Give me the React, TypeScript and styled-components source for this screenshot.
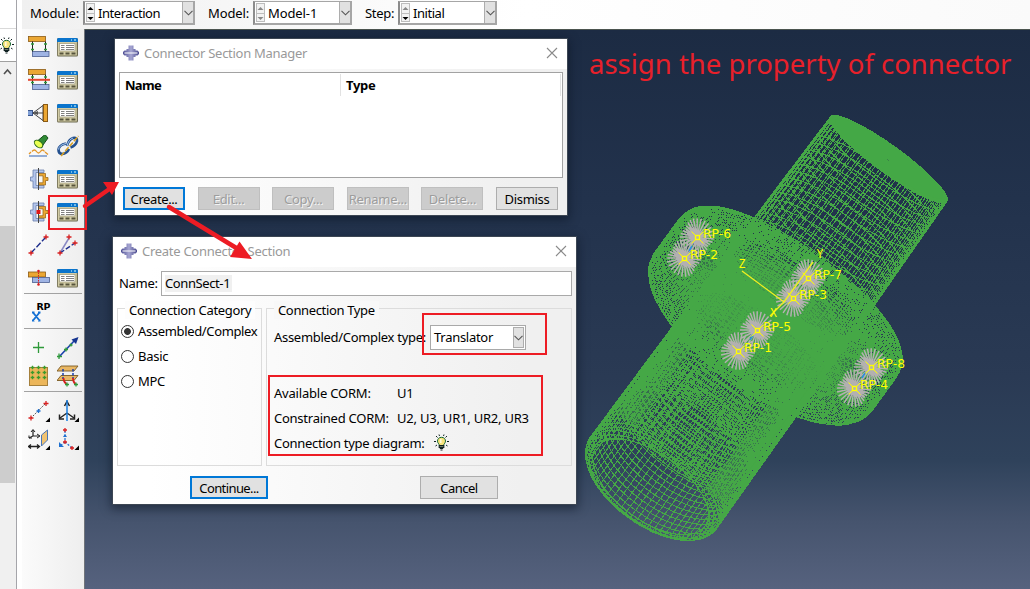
import React from 'react';
import styled, { createGlobalStyle, css } from 'styled-components';

const Global = createGlobalStyle`
  html, body { margin: 0; padding: 0; overflow: hidden; }
  *, *::before, *::after { box-sizing: border-box; }
  body { font-family: "Noto Sans", "Open Sans", sans-serif; font-size: 13px; color: #000; background: #fff; }
  svg { display: block; flex: none; }
`;

/* ---------- frame ---------- */
const Page = styled.div`position: relative; display: flex; width: 1030px; height: 589px; overflow: hidden; background: #fff;`;
const TreeStrip = styled.div`
  width: 17px; height: 589px; flex: none; display: flex; flex-direction: column;
  padding-top: 28px; border-right: 1px solid #a5a5aa;
  background: linear-gradient(#fff 28px, #d9d9d9 28px, #d9d9d9 29px, #fff 29px);
`;
const BulbCell = styled.div`height: 34px; padding: 9px 0 0; border-bottom: 1px solid #a0a0a0; overflow: hidden;`;
const ScrollTrack = styled.div`flex: 1; display: flex; flex-direction: column; background: #f0f0f0;`;
const ScrollUp = styled.div`height: 164px; padding: 6px 0 0 2px;`;
const ScrollThumb = styled.div`width: 15px; height: 257px; background: #cdcdcd;`;
const Main = styled.div`margin-left: 5px; flex: 1; display: flex; flex-direction: column; min-width: 0;`;
const ContextBar = styled.div`
  height: 29px; flex: none; display: flex; align-items: flex-start; padding: 1px 0 0 8px;
  background: linear-gradient(90deg, #f0f0f0, #fff 50%, #fafafa);
`;
const Work = styled.div`flex: 1; display: flex; min-height: 0;`;
const Toolbox = styled.div`
  width: 63px; flex: none; padding: 7px 5px 0 6px; border-right: 1px solid #70747a;
  background: linear-gradient(90deg, #fbfbfb, #eeeeee);
`;
const ToolRow = styled.div<{ $h?: number }>`display: flex; gap: 7px; height: ${p => p.$h ?? 33}px;`;
const Rule = styled.div<{ $mb?: number }>`height: 1px; margin: 0 -3px ${p => p.$mb ?? 0}px -4px; background: #a2a2a2;`;
const Viewport = styled.div`
  position: relative; flex: 1; overflow: hidden; border-top: 1px solid #4b544f;
  background: linear-gradient(#1c2b43 0%, #22324c 30%, #2a3a54 62%, #2f425b 77%, #46546e 88%, #56627e 100%);
`;

/* ---------- text ---------- */
const Text = styled.span<{ $ls?: number; $bold?: boolean; $c?: string }>`
  white-space: pre; line-height: 18px; letter-spacing: ${p => p.$ls ?? -0.28}px;
  font-weight: ${p => (p.$bold ? 700 : 400)}; color: ${p => p.$c ?? '#000'};
`;

/* ---------- context bar pieces ---------- */
const CtxLabel = styled.div<{ $w: number }>`width: ${p => p.$w}px; padding-top: 3px;`;
const Combo = styled.div<{ $w: number; $mr?: number }>`
  display: flex; width: ${p => p.$w}px; height: 24px; margin-right: ${p => p.$mr ?? 0}px;
  background: #fff; border: 2px solid #a6a6a6; border-top-width: 1px; border-left-color: #8c8c8c; padding-left: 1px;
`;
const Spin = styled.div`width: 9px; margin: 1px 0; border: 1px solid #bdbdbd; background: #f2f2f2; display: flex; flex-direction: column;`;
const ComboValue = styled.div`flex: 1; padding: 2px 0 0 3px;`;
const DropBtn = styled.div`
  width: 11px; background: #e1e1e1; border: 1px solid #adadad; border-width: 0 0 0 1px; display: flex; align-items: center; justify-content: center;
`;

/* ---------- dialogs ---------- */
const Dialog = styled.div<{ $x: number; $y: number; $w: number; $h: number }>`
  position: absolute; left: ${p => p.$x}px; top: ${p => p.$y}px; width: ${p => p.$w}px; height: ${p => p.$h}px;
  display: flex; flex-direction: column; background: linear-gradient(90deg, #fff 8%, #f0f0f0 88%);
  box-shadow: 0 0 0 1px #3c4653, 0 3px 9px 2px rgba(8, 16, 30, 0.5);
`;
const TitleBar = styled.div`height: 30px; flex: none; background: #fff; display: flex; align-items: center; padding: 0 9px 2px 8px;`;
const TitleText = styled.div`flex: 1; padding: 0 0 0 5px;`;
const ListBox = styled.div`
  height: 106px; margin: 3px 4px 0; border: 1px solid #a2a2a2; background: #fff; display: flex; padding: 1px 1px 0 0;
`;
const HeadCell = styled.div<{ $w: number }>`
  width: ${p => p.$w}px; height: 22px; padding: 2px 0 0 5px; border-right: 1px solid #e2e2e2;
`;
const ButtonRow = styled.div`display: flex; padding: 9px 9px 0 8px; justify-content: space-between;`;
const Button = styled.div<{ $w?: number; $state?: 'default' | 'disabled' }>`
  width: ${p => p.$w ?? 62}px; height: 23px; display: flex; align-items: center; justify-content: center;
  background: #e1e1e1; border: 1px solid #adadad;
  ${p => p.$state === 'default' && css`border: 2px solid #0078d7;`}
  ${p => p.$state === 'disabled' && css`background: #cccccc; border-color: #bfbfbf; span { color: #9d9d9d; text-shadow: 1px 1px 0 #f4f4f4; }`}
`;
const NameRow = styled.div`display: flex; align-items: center; height: 25px; margin: 4px 4px 0 6px;`;
const NameLabel = styled.div`width: 42px; padding-bottom: 1px;`;
const NameInput = styled.div`flex: 1; height: 25px; border: 1px solid #a9a9a9; background: #fff; padding: 3px 0 0 3px;`;
const Selected = styled.div`width: 67px; height: 17px; background: #f0f0f0; display: flex; align-items: flex-end;`;
const Groups = styled.div`display: flex; gap: 4px; margin: 12px 4px 0; height: 158px;`;
const Group = styled.div<{ $w: number }>`width: ${p => p.$w}px; height: 158px; border: 1px solid #dcdcdc; display: flex; flex-direction: column;`;
const Legend = styled.div<{ $w: number; $bg: string }>`
  width: ${p => p.$w}px; height: 18px; margin: -8px 0 0 7px; padding-left: 4px; background: ${p => p.$bg};
`;
const RadioRow = styled.div`display: flex; align-items: center; height: 25px; padding: 0 0 1px 3px; gap: 4px;`;
const Radio = styled.div<{ $on?: boolean }>`
  flex: none; width: 13px; height: 13px; border-radius: 50%; border: 1px solid #333;
  background: ${p => (p.$on ? 'radial-gradient(circle, #333 0 3px, #fff 3.8px)' : '#fff')};
`;
const TypeRow = styled.div`display: flex; align-items: center; height: 25px; margin-top: 6px; padding-left: 7px;`;
const TypeLabel = styled.div`width: 156px; padding-bottom: 1px;`;
const TypeCombo = styled.div`width: 96px; height: 25px; border: 1px solid #a9a9a9; background: #fff; display: flex; align-items: center; padding: 1px 1px 1px 3px;`;
const TypeValue = styled.div`flex: 1; display: flex; padding-bottom: 1px;`;
const TypeDrop = styled.div`width: 11px; height: 21px; background: #e1e1e1; border: 1px solid #adadad; display: flex; align-items: center; justify-content: center;`;
const InfoRows = styled.div`margin-top: 30px; padding-left: 7px;`;
const InfoRow = styled.div`display: flex; align-items: center; height: 25px;`;
const InfoKey = styled.div<{ $w: number }>`width: ${p => p.$w}px;`;
const FooterRow = styled.div`display: flex; gap: 152px; padding: 10px 0 0 77px;`;

/* ---------- overlays ---------- */
const Caption = styled.div`
  position: absolute; left: 589px; top: 43px; font-size: 27.5px; line-height: 42px; white-space: pre;
  color: #e8202a;
`;
const Overlay = styled.svg`position: absolute; left: 0; top: 0; pointer-events: none;`;
const Scene = styled.svg`position: absolute; left: 0; top: -1px;`;

/* ---------- small glyphs ---------- */
const Chevron = () => (
  <svg width="9" height="6" viewBox="0 0 9 6"><path d="M0.5 0.8 4.5 4.8 8.5 0.8" fill="none" stroke="#555" strokeWidth="1.1" /></svg>
);
const SpinArrows = ({ up, down }: { up: string; down: string }) => (
  <svg width="7" height="19" viewBox="0 0 7 19">
    <path d="M0.500 6 3.500 3 6.500 6z" fill={up} /><path d="M0 9.5h7" stroke="#bdbdbd" /><path d="M0.500 13 3.500 16 6.500 13z" fill={down} />
  </svg>
);
const CloseX = () => (
  <svg width="12" height="12" viewBox="0 0 12 12"><path d="M1 1 11 11M11 1 1 11" stroke="#8a8a8a" strokeWidth="1.1" /></svg>
);
const AppMark = () => (
  <svg width="16" height="16" viewBox="0 0 16 16">
    <defs><linearGradient id="mk" x1="0" x2="1"><stop offset="0" stopColor="#4e4e94" /><stop offset=".5" stopColor="#a6a6d2" /><stop offset="1" stopColor="#47478d" /></linearGradient></defs>
    <path d="M5.500 0.500h5v3.500h2v1.500h2L16 7v2l-1.500 1.500h-2V12h-2v3.500h-5V12h-2v-1.500h-2L0 9V7l1.500-1.500h2V4h2z" fill="url(#mk)" />
    <path d="M1.500 8h13" stroke="#fff" strokeWidth="1" />
  </svg>
);
const Bulb = ({ dx = 0 }: { dx?: number }) => (
  <svg width="16" height="17" viewBox={`${dx} 0 16 17`}>
    <path d="M7.500 3.300c-2.700 0-4 1.900-4 3.800 0 1.800 1.500 2.500 2 4.400h4c.5-1.900 2-2.600 2-4.400 0-1.900-1.300-3.800-4-3.800z" fill="#f7e37c" stroke="#163" strokeWidth="1" />
    <path d="M6.800 5v4" stroke="#fffbe0" strokeWidth="1.500" />
    <path d="M5.200 11.500h4.600v2H5.200zM5.800 14.500h3.400M6.500 16h2" fill="#6a7a6a" stroke="#122" strokeWidth="1.100" />
    <path d="M0 7.500h2M13 7.500h2M2 2l1.500 1.500M13 2l-1.500 1.500M5 .5l.5 1.500M10 .5 9.500 2M1.500 12 3 11M13.500 12 12 11" stroke="#122" strokeWidth="1" />
  </svg>
);

/* ---------- toolbox icons, 22 × 22 ---------- */
const Ico = ({ children, w = 22, h = 22 }: { children: React.ReactNode; w?: number; h?: number }) => (
  <svg width={w} height={h} viewBox={`0 0 ${w} ${h}`}>{children}</svg>
);
const Manager = () => (
  <Ico>
    <rect x="0" y="2" width="21" height="18.500" rx="1.500" fill="#6d6a50" />
    <rect x="0.800" y="6" width="19" height="13.500" fill="#d2cca6" />
    <path d="M0 3.500Q0 2 1.500 2h18Q21 2 21 3.500V6H0z" fill="#0a74cc" />
    <path d="M14 4h1M17 4h2" stroke="#dff" strokeWidth="1.200" />
    <rect x="2.500" y="7.500" width="15.500" height="7.500" fill="#fff" stroke="#a5a180" strokeWidth=".8" />
    <path d="M4 9.500h3.500M4 11.500h3.500M4 13.500h3.500M9 9.500h8M9 11.500h8M9 13.500h8" stroke="#808080" />
    <path d="M2.500 17.500h4M8.500 17.500h4M14.500 17.500h4" stroke="#57543c" strokeWidth="2" />
  </Ico>
);
const Plates = ({ red }: { red?: boolean }) => (
  <Ico>
    <rect x="0.500" y="0.500" width="17" height="5" fill="#eba733" stroke="#8a5a14" strokeWidth=".8" />
    <rect x="4.500" y="15.500" width="16.500" height="5" fill="#9fb4e4" stroke="#4b5f91" strokeWidth=".8" />
    <path d="M4.500 5.500v10M17.500 5.500v10" stroke="#222" strokeWidth="1" />
    <path d="M3 8h3M3 13.500h3M16 8h3M16 13.500h3" stroke="#2f9a3a" strokeWidth="1.500" />
    {red && <path d="M0 10.800h22" stroke="#e4472f" strokeWidth="2" />}
  </Ico>
);
const Coupling = () => (
  <Ico>
    <path d="M5 11h10M5 11 15 3.500M5 11l10 7.500M15 3v16" stroke="#444" strokeWidth="1" fill="none" />
    <path d="M10 9v4l-5-2z" fill="#555" />
    <rect x="-0.500" y="8.500" width="5" height="5" fill="#7f9fd6" stroke="#3b568c" />
    <rect x="15.500" y="2.500" width="4" height="17" fill="#eba733" stroke="#8a5a14" />
  </Ico>
);
const Torch = () => (
  <Ico>
    <path d="M10 5.500 17 -0.500 20 3 15 10z" fill="#2f8a35" stroke="#184f1c" />
    <path d="M8 5.500 15 11" stroke="#184f1c" strokeWidth="2" />
    <ellipse cx="10.500" cy="9" rx="4.800" ry="3" transform="rotate(40 10.500 9)" fill="#e9ff50" stroke="#2c6a1c" />
    <path d="M1 19 3 17M4 16.500q2.500-3 4.500 0 2 3 4 0t4 0M17 17l3 2.500" fill="none" stroke="#e3962a" strokeWidth="1.300" />
    <path d="M1 21h18" stroke="#2f62b5" />
  </Ico>
);
const Chain = () => (
  <Ico>
    <path d="M9 8.500Q2 10 1.500 14.500q-.2 4 3.500 4.500Q10 18.500 12 14" fill="none" stroke="#23508f" strokeWidth="2.600" />
    <path d="M10 11q1.500-6.500 6-8 4.500-.8 4 3Q19 10.500 13.500 12.500" fill="none" stroke="#23508f" strokeWidth="2.600" />
    <path d="M9 8.500Q2 10 1.500 14.500M10 11q1.500-6.500 6-8" fill="none" stroke="#a9c8ee" strokeWidth="1" />
    <path d="M4 21 21.500 1" stroke="#dca222" strokeWidth="1.500" strokeDasharray="5 1.500" />
  </Ico>
);
const Clamp = ({ dot }: { dot?: boolean }) => (
  <Ico>
    <path d="M5 2h11v2.500h-8v13h8v2.500h-11v-7h-2.500v-4h2.500z" fill="#b3c5ec" stroke="#6a7dab" strokeWidth=".8" />
    <path d="M10.500 5.500h7v4h2.500v3h-2.500v4.500h-7v-2.200h4.500v-7h-4.500z" fill="#eba733" stroke="#9a6a1c" strokeWidth=".8" />
    <path d="M10.500 0v22" stroke="#444" strokeWidth="1" />
    {dot && <rect x="8.500" y="9" width="4" height="4" fill="#e01818" />}
  </Ico>
);
const plus = (x: number, y: number, c: string, s = 2.5) => (
  <path key={`${x}-${y}`} d={`M${x - s} ${y}h${2 * s}M${x} ${y - s}v${2 * s}`} stroke={c} strokeWidth="1.300" />
);
const Wire = () => (
  <Ico><path d="M3 19 18 3" stroke="#1d2d8c" strokeWidth="1.400" strokeDasharray="6 2" />{plus(3, 19, '#d82020')}{plus(18, 3, '#d82020')}</Ico>
);
const Wire2 = () => (
  <Ico>
    <path d="M3 19 12 4" stroke="#8a8ac4" strokeWidth="1.500" /><path d="M3 19 18 9" stroke="#1d2d8c" strokeWidth="1.400" strokeDasharray="5 2" />
    {plus(3, 19, '#d82020')}{plus(12, 3, '#d82020')}{plus(18, 9, '#d82020')}
  </Ico>
);
const Fastener = () => (
  <Ico>
    <rect x="0.500" y="5" width="17" height="5" fill="#eba733" stroke="#8a5a14" strokeWidth=".8" />
    <rect x="4.500" y="10.500" width="17" height="5" fill="#9fb4e4" stroke="#4b5f91" strokeWidth=".8" />
    <path d="M10.500 3v15" stroke="#d82020" strokeDasharray="1.500 1" />
    <circle cx="10.500" cy="4" r="1.300" fill="#d82020" /><circle cx="10.500" cy="17.500" r="1.300" fill="#d82020" />
  </Ico>
);
const RefPoint = () => (
  <Ico w={26}>
    <text x="8.500" y="8.500" fontFamily="DejaVu Sans" fontWeight="700" fontSize="9.500" textLength="14" lengthAdjust="spacing">RP</text>
    <path d="M5 11.500 11.500 19.500M11.500 11.500 5 19.500M4 11.500h2.500M10 11.500h2.500M4 19.500h2.500M10 19.500h2.500" stroke="#1370d4" strokeWidth="1.900" fill="none" />
  </Ico>
);
const PointTool = () => <Ico>{plus(10.5, 10.5, '#2f9a3a', 5.5)}</Ico>;
const Vector = () => (
  <Ico>
    <path d="M2 20 18 3" stroke="#1a3fae" strokeWidth="1.600" />{plus(2, 19.500, '#2f9a3a', 3)}{plus(9, 12.500, '#2f9a3a', 2)}
    <path d="M21.500 0 19 7l-4.500-4.500z" fill="#15348f" />{plus(14, 8, '#2f9a3a', 1.500)}
  </Ico>
);
const GridPlate = () => (
  <Ico>
    <rect x="1.500" y="2.500" width="18" height="18" fill="#ecb65a" stroke="#a5803c" />
    {[4, 10, 16].flatMap(x => [2.5, 7.5, 12.5].map(y => plus(x + 0.5, y, '#3b9a2c', 1.8)))}
  </Ico>
);
const TwoPlates = () => (
  <Ico>
    <path d="M4 1h17l-4 5H0zM4 10.500h17l-4 5H0z" fill="#e8b765" stroke="#7a5a22" strokeWidth=".9" />
    <path d="M6 4v10M16 4v10" stroke="#1a3fae" strokeWidth="1.500" strokeDasharray="2.500 1.500" />
    <path d="M6.500 13q0 4 3 6M16 13q0 4 2.500 6" stroke="#d82020" strokeWidth="1.800" fill="none" />{plus(10, 19.500, '#2f9a3a', 2)}{plus(19, 19.500, '#2f9a3a', 2)}
  </Ico>
);
const Corner = () => <path d="M22 17.500v4.500h-4.500z" fill="#000" />;
const DatumPt = () => (
  <Ico>{<path d="M3 18 18 3" stroke="#333" strokeDasharray="1.500 1.500" />}{plus(3, 18, '#d82020')}{plus(10.5, 11, '#1d6fd0', 2)}{plus(18, 3.500, '#d82020')}<Corner /></Ico>
);
const Csys = () => (
  <Ico>
    <path d="M10 13 3 18M10 13l7 5" stroke="#222" strokeWidth="1.400" />
    <path d="M7.500 6 10 1.500 12.500 6M2.500 14.500v4.500H7M17.500 14.500v4.500H13" fill="none" stroke="#222" strokeWidth="1.500" />
    <path d="M10 0v21" stroke="#1a7fe0" strokeWidth="1.500" /><Corner />
  </Ico>
);
const DatumPlane = () => (
  <Ico>
    <path d="M5 2v6l-4 2M5 8h6" stroke="#222" fill="none" strokeWidth="1.200" /><path d="M3 4 5 1.500 7 4M9 6l3 2-3 2M1 7.500V10h3" fill="none" stroke="#222" />
    <path d="M1 18.500h10M3 16.500l-2.500 2 2.500 2M9 16.500l2.500 2-2.500 2" fill="none" stroke="#222" strokeWidth="1.300" />
    <path d="M13.500 7 19.500 2v10l-6 6z" fill="#f0c373" stroke="#4a76b8" /><Corner />
  </Ico>
);
const CsysPts = () => (
  <Ico>
    <path d="M8 3v10M8 14l-5 4M8 14l7 6" stroke="#1d6fd0" strokeDasharray="2 1.500" strokeWidth="1.200" />
    {plus(8, 2, '#d82020', 2)}{plus(8, 14, '#d82020', 2)}{plus(15, 20, '#d82020', 2)}<path d="M8 6l2 3H6zM2 14v5h5z" fill="#1d6fd0" /><Corner />
  </Ico>
);

/* ---------- wireframe model ---------- */
const ratio = (y: number) => 0.19 + (0.31 * (y + 195)) / 406;
type Pt = [number, number];
const lerp = (a: Pt, b: Pt, step: number): Pt[] => {
  const n = Math.max(1, Math.round(Math.hypot(b[0] - a[0], b[1] - a[1]) / step));
  return Array.from({ length: n + 1 }, (_, i) => [a[0] + ((b[0] - a[0]) * i) / n, a[1] + ((b[1] - a[1]) * i) / n] as Pt);
};
/* profile points are [axial position, radius] */
const surface = (profile: Pt[], meridians: number) => {
  const rings = profile.map(([y, r]) => {
    const b = r * ratio(y);
    return `M${-r} ${y}a${r} ${b} 0 1 0 ${2 * r} 0a${r} ${b} 0 1 0 ${-2 * r} 0`;
  });
  const lines = Array.from({ length: meridians }, (_, i) => {
    const t = (i / meridians) * Math.PI * 2 + 0.02;
    return profile.map(([y, r], k) => `${k ? 'L' : 'M'}${(r * Math.cos(t)).toFixed(2)} ${(y + r * ratio(y) * Math.sin(t)).toFixed(2)}`).join('');
  });
  return rings.join('') + lines.join('');
};
const upperTube = surface(lerp([-195, 72], [-34, 75], 9), 56);
const upperCap = surface(lerp([-195, 72], [-194, 4], 2.2), 90);
const lowerTube = surface(lerp([28, 76], [205, 78], 5.6), 74);
const lowerBore = surface(lerp([40, 71], [150, 72], 6), 64);
const lowerRim = surface([[205, 78], [208, 77], [211, 74], [212, 70], [210, 67]], 74);
const core = surface(lerp([-34, 75], [28, 76], 3), 100);
const flange = surface(
  [...lerp([-36, 75], [-38, 122], 4), [-36, 128], [-32, 132], [-26, 134], ...lerp([-22, 134.5], [18, 134.5], 4), [24, 133], [29, 129], [32, 124], ...lerp([33, 120], [30, 76], 4)] as Pt[],
  150,
);

const refs: { n: number; x: number; y: number }[] = [
  { n: 6, x: 697, y: 237 }, { n: 2, x: 684, y: 258 }, { n: 7, x: 808, y: 278 }, { n: 3, x: 793, y: 298 },
  { n: 5, x: 757, y: 330 }, { n: 1, x: 738, y: 351 }, { n: 8, x: 871, y: 367 }, { n: 4, x: 854, y: 388 },
];
/* spokes run to two offset rims, one on each side of the plate hole */
const burst = (x: number, y: number) =>
  Array.from({ length: 44 }, (_, i) => {
    const t = (i / 44) * Math.PI * 2;
    const side = i % 2 ? 1 : -1;
    const u = 14.500 * Math.cos(t);
    const v = 11 * Math.sin(t) + side * 5;
    const ex = u * 0.81 - v * 0.59;
    const ey = u * 0.59 + v * 0.81;
    return `M${x} ${y}l${(ex * 1.05).toFixed(1)} ${(ey * 1.15).toFixed(1)}`;
  }).join('');

const Model = () => (
  <Scene width="945" height="560" viewBox="85 29 945 560">
    <defs>
      <radialGradient id="dense"><stop offset="0" stopColor="#45a846" stopOpacity=".95" /><stop offset=".6" stopColor="#45a846" stopOpacity=".75" /><stop offset="1" stopColor="#45a846" stopOpacity="0" /></radialGradient>
    </defs>
    <g transform="translate(774 317) rotate(36)">
      <g fill="none" stroke="#45a846" strokeWidth="1" shapeRendering="crispEdges">
        <path d={upperTube} /><path d={upperCap} /><path d={flange} /><path d={core} />
        <path d={lowerBore} /><path d={lowerTube} /><path d={lowerRim} />
      </g>
      <ellipse cx="0" cy="4" rx="124" ry="64" fill="url(#dense)" />
      <ellipse cx="0" cy="-196" rx="66" ry="12" fill="#45a846" opacity=".7" />
      <rect x="-72" y="10" width="24" height="160" fill="#45a846" opacity=".45" />
      <rect x="46" y="10" width="24" height="170" fill="#45a846" opacity=".5" />
    </g>
    <path d={refs.map(r => burst(r.x, r.y)).join('')} stroke="#b3b0b0" strokeWidth="1.500" />
    <g stroke="#2a8fe0" strokeWidth="1.500"><path d="M689 251l3-5M750 340l3-5M862 378l3-5" /></g>
    <path d="M784 302 742 271M784 302 813 262M784 302 770 316" stroke="#f0f020" strokeWidth="1.300" />
    <g stroke="#ffff00" fill="none" strokeWidth="1">
      {refs.map(({ n, x, y }) => (
        <g key={n} transform={`translate(${x + 0.5} ${y + 0.5})`}>
          <rect x="-2" y="-2" width="4" height="4" strokeWidth="1.400" /><path d="M-6-6l4 4M6-6l-4 4M-6 6l4-4M6 6l-4-4" />
        </g>
      ))}
    </g>
    <g fill="#ffff00" fontFamily="DejaVu Sans" fontSize="12">
      {refs.map(({ n, x, y }) => <text key={n} x={x + 6} y={y + 1} textLength="28" lengthAdjust="spacingAndGlyphs">{`RP-${n}`}</text>)}
      <g fontFamily="DejaVu Sans Mono" fontSize="11.500"><text x="738.500" y="268">Z</text><text x="816.500" y="258">Y</text><text x="770" y="317">X</text></g>
    </g>
  </Scene>
);

const disabledButtons = ['Edit...', 'Copy...', 'Rename...', 'Delete...'];

export default function App() {
  return (
    <Page>
      <Global />
      <TreeStrip>
        <BulbCell><Bulb dx={1} /></BulbCell>
        <ScrollTrack>
          <ScrollUp><svg width="11" height="8" viewBox="0 0 11 8"><path d="M2 6 5.500 2 9 6" fill="none" stroke="#505050" strokeWidth="1.600" /></svg></ScrollUp>
          <ScrollThumb />
        </ScrollTrack>
      </TreeStrip>
      <Main>
        <ContextBar>
          <CtxLabel $w={53}><Text $ls={-0.1}>Module:</Text></CtxLabel>
          <Combo $w={112} $mr={13}><Spin><SpinArrows up="#000" down="#000" /></Spin><ComboValue><Text $ls={-0.45}>Interaction</Text></ComboValue><DropBtn><Chevron /></DropBtn></Combo>
          <CtxLabel $w={45}><Text $ls={-0.1}>Model:</Text></CtxLabel>
          <Combo $w={99} $mr={13}><Spin><SpinArrows up="#888" down="#888" /></Spin><ComboValue><Text $ls={-0.1}>Model-1</Text></ComboValue><DropBtn><Chevron /></DropBtn></Combo>
          <CtxLabel $w={33}><Text>Step:</Text></CtxLabel>
          <Combo $w={99}><Spin><SpinArrows up="#888" down="#000" /></Spin><ComboValue><Text $ls={-0.45}>Initial</Text></ComboValue><DropBtn><Chevron /></DropBtn></Combo>
        </ContextBar>
        <Work>
          <Toolbox>
            <ToolRow><Plates /><Manager /></ToolRow>
            <ToolRow><Plates red /><Manager /></ToolRow>
            <ToolRow><Coupling /><Manager /></ToolRow>
            <ToolRow><Torch /><Chain /></ToolRow>
            <ToolRow><Clamp /><Manager /></ToolRow>
            <ToolRow><Clamp dot /><Manager /></ToolRow>
            <ToolRow><Wire /><Wire2 /></ToolRow>
            <ToolRow $h={26}><Fastener /><Manager /></ToolRow>
            <Rule $mb={7} />
            <ToolRow $h={27}><RefPoint /></ToolRow>
            <Rule $mb={8} />
            <ToolRow $h={28}><PointTool /><Vector /></ToolRow>
            <ToolRow $h={26}><GridPlate /><TwoPlates /></ToolRow>
            <Rule $mb={8} />
            <ToolRow $h={28}><DatumPt /><Csys /></ToolRow>
            <ToolRow><DatumPlane /><CsysPts /></ToolRow>
          </Toolbox>
          <Viewport>
            <Model />
            <Dialog $x={30} $y={9} $w={452} $h={176}>
              <TitleBar><AppMark /><TitleText><Text $c="#999">Connector Section Manager</Text></TitleText><CloseX /></TitleBar>
              <ListBox>
                <HeadCell $w={221}><Text $bold $ls={-0.7}>Name</Text></HeadCell>
                <HeadCell $w={220}><Text $bold $ls={-0.3}>Type</Text></HeadCell>
              </ListBox>
              <ButtonRow>
                <Button $state="default"><Text $ls={-0.4}>Create...</Text></Button>
                {disabledButtons.map(t => <Button key={t} $state="disabled"><Text>{t}</Text></Button>)}
                <Button><Text>Dismiss</Text></Button>
              </ButtonRow>
            </Dialog>
            <Dialog $x={28} $y={207} $w={463} $h={267}>
              <TitleBar><AppMark /><TitleText><Text $c="#999">Create Connector Section</Text></TitleText><CloseX /></TitleBar>
              <NameRow>
                <NameLabel><Text>Name:</Text></NameLabel>
                <NameInput><Selected><Text $ls={-0.4}>ConnSect-1</Text></Selected></NameInput>
              </NameRow>
              <Groups>
                <Group $w={145}>
                  <Legend $w={130} $bg="#fdfdfd"><Text $ls={-0.32}>Connection Category</Text></Legend>
                  <RadioRow><Radio $on /><Text $ls={-0.35}>Assembled/Complex</Text></RadioRow>
                  <RadioRow><Radio /><Text>Basic</Text></RadioRow>
                  <RadioRow><Radio /><Text>MPC</Text></RadioRow>
                </Group>
                <Group $w={306}>
                  <Legend $w={105} $bg="#f8f8f8"><Text $ls={-0.35}>Connection Type</Text></Legend>
                  <TypeRow>
                    <TypeLabel><Text $ls={-0.3}>Assembled/Complex type:</Text></TypeLabel>
                    <TypeCombo><TypeValue><Text>Translator</Text></TypeValue><TypeDrop><Chevron /></TypeDrop></TypeCombo>
                  </TypeRow>
                  <InfoRows>
                    <InfoRow><InfoKey $w={123}><Text $ls={-0.2}>Available CORM:</Text></InfoKey><Text>U1</Text></InfoRow>
                    <InfoRow><InfoKey $w={123}><Text $ls={-0.25}>Constrained CORM:</Text></InfoKey><Text $ls={-0.22}>U2, U3, UR1, UR2, UR3</Text></InfoRow>
                    <InfoRow><InfoKey $w={160}><Text $ls={-0.3}>Connection type diagram:</Text></InfoKey><Bulb /></InfoRow>
                  </InfoRows>
                </Group>
              </Groups>
              <FooterRow>
                <Button $w={78} $state="default"><Text $ls={-0.6}>Continue...</Text></Button>
                <Button $w={78}><Text $ls={-0.5}>Cancel</Text></Button>
              </FooterRow>
            </Dialog>
          </Viewport>
        </Work>
      </Main>
      <Caption>assign the property of connector</Caption>
      <Overlay width="1030" height="589" viewBox="0 0 1030 589">
        <g fill="none" stroke="#ed1c24" strokeWidth="2">
          <rect x="49" y="196" width="37" height="33" />
          <rect x="423" y="314" width="123" height="40" />
          <rect x="269" y="376" width="273" height="79" />
        </g>
        <g fill="#ed1c24" stroke="#ed1c24">
          <path d="M85 206 108 190M169 207 238 249" strokeWidth="4.500" strokeLinecap="round" />
          <path d="M119 182 103 182 112 195zM252 259 239.500 241.500 230 257z" stroke="none" />
        </g>
      </Overlay>
    </Page>
  );
}
